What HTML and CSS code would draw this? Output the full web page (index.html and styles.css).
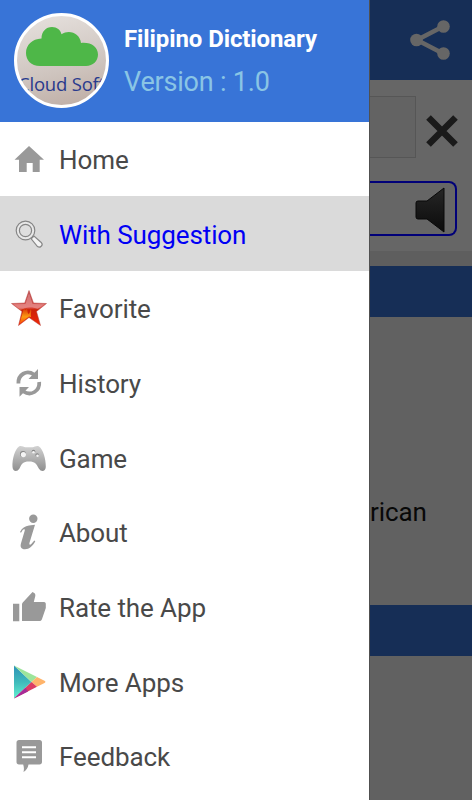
FILE: index.html
```html
<!DOCTYPE html>
<html lang="en">
<head>
  <meta charset="UTF-8" />
  <title>Filipino Dictionary</title>
  <meta name="viewport" content="width=device-width, initial-scale=1" />
  <link rel="stylesheet" href="styles.css">
</head>
<body>

<aside class="drawer">
  <header class="drawer-header">
    <div class="avatar">
      <svg class="cloud" viewBox="0 0 72 39" width="72" height="39">
        <path d="M14 39C5 39 0 33 0 26c0-8 6-14 15.500-14.500C15.500 4.500 20 0 26 0c5 0 8.500 3 9.500 7.200C44 2 54 7 55 16c10-1 17 4 17 11.500C72 34 67 39 60 39z" />
      </svg>
      <span class="avatar-text">Cloud Soft</span>
    </div>
    <div class="app-info">
      <h1>Filipino Dictionary</h1>
      <p>Version : 1.0</p>
    </div>
  </header>

  <nav class="menu">
    <a class="menu-item">
      <svg class="icon" viewBox="0 0 36 36"><path d="M18 5l15 13.700h-4.300V31h-7v-9h-6v9H8V18.700H3.500z" /></svg>
      <span>Home</span>
    </a>
    <a class="menu-item active">
      <svg class="icon" viewBox="0 0 36 36">
        <path d="M20.200 22.800l2.800-2.800 7.500 6.800c2 2.200-1.500 5.700-4 3.800z" fill="#f4f4f4" stroke="#888" stroke-width="1.200" />
        <circle cx="14.500" cy="14.500" r="7.700" fill="#dedede" stroke="#858585" stroke-width="4.400" />
        <circle cx="14.500" cy="14.500" r="7.700" fill="none" stroke="#e8e8e8" stroke-width="2" />
      </svg>
      <span>With Suggestion</span>
    </a>
    <a class="menu-item">
      <svg class="icon" viewBox="0 0 36 36">
        <defs>
          <linearGradient id="star" x1="0" y1="0" x2="0" y2="1">
            <stop offset="0" stop-color="#b83f43" />
            <stop offset=".48" stop-color="#dd5a56" />
            <stop offset=".55" stop-color="#cc2208" />
            <stop offset="1" stop-color="#f02808" />
          </linearGradient>
          <linearGradient id="flame" x1="0" y1="0" x2="0" y2="1">
            <stop offset="0" stop-color="#d83008" />
            <stop offset=".55" stop-color="#fb9a12" />
            <stop offset="1" stop-color="#f84a08" />
          </linearGradient>
        </defs>
        <path d="M18 .5l4.500 12.500L35.500 13.500 25.500 21.500l4 14L18 27.500 7.500 35.500 11 21.500.5 13.500 13.700 13z" fill="url(#star)" stroke="#b5403a" stroke-width=".5" />
        <path d="M11.500 23c1-2 .5-4 2-5 0 3 1.500 3 2 0 1.500 2 .5 5 2 6 2-1 1-4 2.500-5 1 3-1 5 0 8l-2-.500-9.500 7.500z" fill="url(#flame)" />
        <path d="M18 2.500l3.500 11.500 12 .3-7 4.700c-6-3-11-2-17 1l-7-5.700 12-.3z" fill="#fff" opacity=".25" />
      </svg>
      <span>Favorite</span>
    </a>
    <a class="menu-item">
      <svg class="icon" viewBox="0 0 36 36">
        <g fill="none" stroke="#999" stroke-width="3.800">
          <path d="M7.400 18.500C7 9.500 15.500 4.500 23 9.500" />
          <path d="M28.200 17C29 26 20 31.500 12.500 26.500" />
        </g>
        <path d="M27 4v10H17.500zM8.500 31.800V22H18z" />
      </svg>
      <span>History</span>
    </a>
    <a class="menu-item">
      <svg class="icon" viewBox="0 0 36 36">
        <defs>
          <linearGradient id="pad" x1="0" y1="0" x2="0" y2="1">
            <stop offset="0" stop-color="#d2d2d2" />
            <stop offset="1" stop-color="#8e8e8e" />
          </linearGradient>
        </defs>
        <path d="M8 6.500c2.500-1.200 4.500.8 6.500.8h7c2 0 4-2 6.500-.8C32 9 35 19 34.800 27c-.3 4.500-4.500 5.500-7 1.500C25.500 24 24 21.500 18 21.500S10.500 24 8.500 28.500c-2.500 4-6.700 3-7-1.500C1 19 4 9 8 6.500z" fill="url(#pad)" />
        <circle cx="12" cy="14" r="3" fill="#858585" />
        <circle cx="12.400" cy="14.600" r="2.600" fill="#f4f4f4" />
        <g fill="#858585"><circle cx="22.500" cy="11.500" r="1.800" /><circle cx="26.200" cy="15" r="1.800" /></g>
        <g fill="#f4f4f4"><circle cx="22.500" cy="12.300" r="1.300" /><circle cx="26.500" cy="15.800" r="1.300" /></g>
      </svg>
      <span>Game</span>
    </a>
    <a class="menu-item">
      <svg class="icon" viewBox="0 0 36 36">
        <circle cx="22.300" cy="4.800" r="4.200" />
        <path d="M9 18c2-4 5-6 9-6.500l6-.7-5.500 18c-.5 2 .5 2.300 1.800 1.200l3-3.500 1 .8c-2.500 4.500-6 8-10.300 8-4 0-5-2.500-4-6l3.700-12.500c.5-1.800-1-1.800-2-.7L10 18.800z" />
      </svg>
      <span>About</span>
    </a>
    <a class="menu-item">
      <svg class="icon" viewBox="0 0 36 36"><path d="M2 14.700h6.300v17.500H2zM11 32V15.500c0-1 .3-1.700 1-2.300L21.500 3c2 .7 3.300 2.300 2.800 4l-1.500 6H33c1.300 0 2 1 1.800 2.300V19L31 30c-.5 1.400-1.300 2-2.500 2z" /></svg>
      <span>Rate the App</span>
    </a>
    <a class="menu-item">
      <svg class="icon" viewBox="0 0 36 36">
        <defs>
          <linearGradient id="play" x1="0" y1="0" x2="0" y2="1">
            <stop offset="0" stop-color="#2d91b8" />
            <stop offset=".5" stop-color="#3fbabb" />
            <stop offset="1" stop-color="#64f0d0" />
          </linearGradient>
        </defs>
        <path d="M3 1.500v33L20.500 18z" fill="url(#play)" />
        <path d="M3 1.500L26 13l-5.500 5z" fill="#9de59b" />
        <path d="M26 13l7.500 3.700c1.200.6 1.200 1.600 0 2.200L26 22.700l-5.500-4.700z" fill="#ffb46b" />
        <path d="M20.500 18L26 22.700 3 34.500z" fill="#dc3c63" />
        <path d="M14.500 23.700l2.500 3.700-14 7.100z" fill="#a72c98" />
      </svg>
      <span>More Apps</span>
    </a>
    <a class="menu-item">
      <svg class="icon" viewBox="0 0 36 36">
        <path d="M8 2h20.500c1.700 0 2.500 1 2.500 2.500V24c0 1.600-1 2.500-2.500 2.500H17.500C17 30 15 32.500 12.500 34c.7-2.500.5-5-.3-7.500H8c-1.600 0-2.500-1-2.500-2.500V4.500C5.500 3 6.500 2 8 2z" />
        <path d="M11 9.200h14M11 14.200h14M11 19.200h14" stroke="#fff" stroke-width="2" />
      </svg>
      <span>Feedback</span>
    </a>
  </nav>
</aside>

<main class="page">
  <div class="topbar">
    <svg viewBox="0 0 40 40" width="40" height="40" fill="#666" stroke="#666">
      <path d="M33 6.500L7 20l26 13.500" fill="none" stroke-width="4.500" />
      <g stroke="none"><circle cx="6.500" cy="20" r="6.300" /><circle cx="33.500" cy="6.500" r="6.300" /><circle cx="33.500" cy="33.500" r="6.300" /></g>
    </svg>
  </div>
  <div class="search">
    <div class="search-row">
      <div class="search-box"></div>
      <svg viewBox="0 0 32 32" width="32" height="32">
        <path d="M2.500 2.500l27 27M29.500 2.500l-27 27" stroke="#1a1a1a" stroke-width="6.500" />
      </svg>
    </div>
    <div class="word-box">
      <svg viewBox="0 0 30 46" width="30" height="46">
        <defs>
          <linearGradient id="speaker" x1="0" y1="0" x2="0" y2="1">
            <stop offset="0" stop-color="#262626" />
            <stop offset="1" stop-color="#0b0b0b" />
          </linearGradient>
        </defs>
        <path d="M1 16q0-2 2-2h9L29 1v44L12 32H3q-2 0-2-2z" fill="url(#speaker)" stroke="#080808" />
      </svg>
    </div>
  </div>
  <div class="divider"></div>
  <div class="section-bar"></div>
  <div class="meaning">rican</div>
  <div class="section-bar"></div>
</main>

</body>
</html>
```
FILE: styles.css
```css
:root {
  --primary: #3874d7;
  --primary-dim: #162e56;
  --page-dim: #616161;
  --text: #494949;
  --icon: #999;
}

* {
  box-sizing: border-box;
}

body {
  margin: 0;
  display: flex;
  height: 800px;
  overflow: hidden;
  font-family: Roboto, sans-serif;
  background: var(--page-dim);
}

.drawer {
  width: 369px;
  flex-shrink: 0;
  background: white;
}

.drawer-header {
  height: 121.700px;
  display: flex;
  padding: 12.500px 0 0 14px;
  background: var(--primary);
}

.avatar {
  width: 95px;
  height: 95px;
  flex-shrink: 0;
  border: 3px solid white;
  border-radius: 50%;
  overflow: hidden;
  background: linear-gradient(165deg, #e7e2df, #cec4be 60%, #bdaba2);
  display: flex;
  flex-direction: column;
  align-items: center;
  padding-top: 11.500px;
}

.cloud {
  fill: #4eb748;
  flex-shrink: 0;
}

.avatar-text {
  margin-top: 6px;
  font-family: "Open Sans", sans-serif;
  font-size: 18.500px;
  line-height: 24px;
  letter-spacing: -0.200px;
  white-space: nowrap;
  color: #293a8d;
}

.app-info {
  margin-left: 15px;
  padding-top: 9px;
  white-space: nowrap;
}

.app-info h1 {
  margin: 0;
  font-size: 24px;
  line-height: 34px;
  font-weight: bold;
  letter-spacing: -0.100px;
  color: white;
}

.app-info p {
  margin: 8px 0 0;
  font-size: 27px;
  line-height: 36px;
  letter-spacing: -0.200px;
  color: #8ac5e5;
}

.menu-item {
  height: 74.670px;
  display: flex;
  align-items: center;
  padding: 2px 0 0 11.500px;
  font-size: 26px;
  letter-spacing: -0.100px;
  color: var(--text);
}

.menu-item.active {
  background: #dadada;
  color: #0000f5;
}

.icon {
  width: 36px;
  height: 36px;
  margin: 0 12px 2px -0.500px;
  flex-shrink: 0;
  fill: var(--icon);
}

.page {
  flex: 1;
  border-left: 1px solid #505050;
}

.topbar {
  height: 80px;
  display: flex;
  align-items: center;
  padding-left: 40px;
  background: var(--primary-dim);
}

.search {
  height: 171px;
  padding-top: 16px;
  background: #666;
}

.search-row {
  display: flex;
  align-items: center;
  gap: 10px;
}

.search-row svg {
  margin-top: 8px;
}

.search-box {
  width: 46px;
  height: 62px;
  border: 1px solid #565656;
  border-left: 0;
  background: #636363;
}

.word-box {
  width: 87px;
  height: 55px;
  margin-top: 23px;
  padding: 4px 0 0 45px;
  border: 2px solid #000078;
  border-left: 0;
  border-radius: 0 8px 8px 0;
}

.divider {
  height: 14.500px;
  background: #5e5e5e;
}

.section-bar {
  height: 51px;
  background: var(--primary-dim);
}

.meaning {
  height: 288px;
  padding-top: 179px;
  font-size: 26px;
  line-height: 32px;
  letter-spacing: -0.100px;
  color: #080808;
}
```
